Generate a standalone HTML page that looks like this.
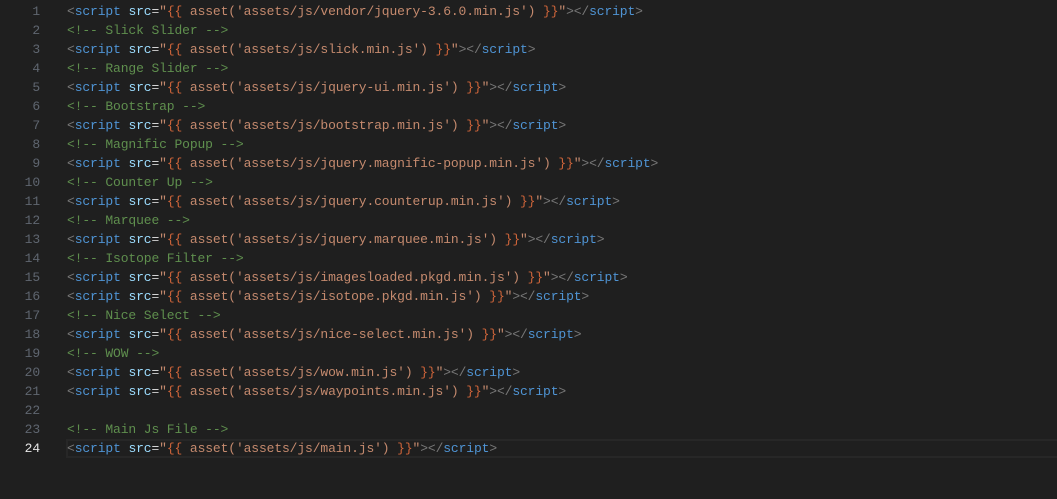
<!DOCTYPE html>
<html><head><meta charset="utf-8">
<style>
html,body{margin:0;padding:0;background:#1f1f1f;width:1057px;height:499px;overflow:hidden}
#e{position:relative;width:1057px;height:499px;font:13px/19px "Liberation Mono",monospace;letter-spacing:-.125px;white-space:pre}
.l{position:absolute;left:67px;height:19px}
.n{position:absolute;left:0;width:40px;text-align:right;height:19px;color:#5f6670}
.n.a{color:#e6e6e6}
.hl{position:absolute;left:66px;right:0;top:439px;height:19px;box-sizing:border-box;border:2px solid #272727;border-right:0}
i{font-style:normal}
.g{color:#787878}.b{color:#4f94d4}.s{color:#9cdcfe}.w{color:#d4d4d4}.o{color:#c58a6e}.y{color:#d0653a}.c{color:#5f8f4e}
</style></head><body><div id="e">
<div class="hl"></div>
<div class="n" style="top:2px">1</div><div class="l" style="top:2px"><i class="g">&lt;</i><i class="b">script</i> <i class="s">src</i><i class="w">=</i><i class="o">"</i><i class="y">{{</i> <i class="o">asset('assets/js/vendor/jquery-3.6.0.min.js')</i> <i class="y">}}</i><i class="o">"</i><i class="g">&gt;&lt;/</i><i class="b">script</i><i class="g">&gt;</i></div>
<div class="n" style="top:21px">2</div><div class="l c" style="top:21px">&lt;!-- Slick Slider --&gt;</div>
<div class="n" style="top:40px">3</div><div class="l" style="top:40px"><i class="g">&lt;</i><i class="b">script</i> <i class="s">src</i><i class="w">=</i><i class="o">"</i><i class="y">{{</i> <i class="o">asset('assets/js/slick.min.js')</i> <i class="y">}}</i><i class="o">"</i><i class="g">&gt;&lt;/</i><i class="b">script</i><i class="g">&gt;</i></div>
<div class="n" style="top:59px">4</div><div class="l c" style="top:59px">&lt;!-- Range Slider --&gt;</div>
<div class="n" style="top:78px">5</div><div class="l" style="top:78px"><i class="g">&lt;</i><i class="b">script</i> <i class="s">src</i><i class="w">=</i><i class="o">"</i><i class="y">{{</i> <i class="o">asset('assets/js/jquery-ui.min.js')</i> <i class="y">}}</i><i class="o">"</i><i class="g">&gt;&lt;/</i><i class="b">script</i><i class="g">&gt;</i></div>
<div class="n" style="top:97px">6</div><div class="l c" style="top:97px">&lt;!-- Bootstrap --&gt;</div>
<div class="n" style="top:116px">7</div><div class="l" style="top:116px"><i class="g">&lt;</i><i class="b">script</i> <i class="s">src</i><i class="w">=</i><i class="o">"</i><i class="y">{{</i> <i class="o">asset('assets/js/bootstrap.min.js')</i> <i class="y">}}</i><i class="o">"</i><i class="g">&gt;&lt;/</i><i class="b">script</i><i class="g">&gt;</i></div>
<div class="n" style="top:135px">8</div><div class="l c" style="top:135px">&lt;!-- Magnific Popup --&gt;</div>
<div class="n" style="top:154px">9</div><div class="l" style="top:154px"><i class="g">&lt;</i><i class="b">script</i> <i class="s">src</i><i class="w">=</i><i class="o">"</i><i class="y">{{</i> <i class="o">asset('assets/js/jquery.magnific-popup.min.js')</i> <i class="y">}}</i><i class="o">"</i><i class="g">&gt;&lt;/</i><i class="b">script</i><i class="g">&gt;</i></div>
<div class="n" style="top:173px">10</div><div class="l c" style="top:173px">&lt;!-- Counter Up --&gt;</div>
<div class="n" style="top:192px">11</div><div class="l" style="top:192px"><i class="g">&lt;</i><i class="b">script</i> <i class="s">src</i><i class="w">=</i><i class="o">"</i><i class="y">{{</i> <i class="o">asset('assets/js/jquery.counterup.min.js')</i> <i class="y">}}</i><i class="o">"</i><i class="g">&gt;&lt;/</i><i class="b">script</i><i class="g">&gt;</i></div>
<div class="n" style="top:211px">12</div><div class="l c" style="top:211px">&lt;!-- Marquee --&gt;</div>
<div class="n" style="top:230px">13</div><div class="l" style="top:230px"><i class="g">&lt;</i><i class="b">script</i> <i class="s">src</i><i class="w">=</i><i class="o">"</i><i class="y">{{</i> <i class="o">asset('assets/js/jquery.marquee.min.js')</i> <i class="y">}}</i><i class="o">"</i><i class="g">&gt;&lt;/</i><i class="b">script</i><i class="g">&gt;</i></div>
<div class="n" style="top:249px">14</div><div class="l c" style="top:249px">&lt;!-- Isotope Filter --&gt;</div>
<div class="n" style="top:268px">15</div><div class="l" style="top:268px"><i class="g">&lt;</i><i class="b">script</i> <i class="s">src</i><i class="w">=</i><i class="o">"</i><i class="y">{{</i> <i class="o">asset('assets/js/imagesloaded.pkgd.min.js')</i> <i class="y">}}</i><i class="o">"</i><i class="g">&gt;&lt;/</i><i class="b">script</i><i class="g">&gt;</i></div>
<div class="n" style="top:287px">16</div><div class="l" style="top:287px"><i class="g">&lt;</i><i class="b">script</i> <i class="s">src</i><i class="w">=</i><i class="o">"</i><i class="y">{{</i> <i class="o">asset('assets/js/isotope.pkgd.min.js')</i> <i class="y">}}</i><i class="o">"</i><i class="g">&gt;&lt;/</i><i class="b">script</i><i class="g">&gt;</i></div>
<div class="n" style="top:306px">17</div><div class="l c" style="top:306px">&lt;!-- Nice Select --&gt;</div>
<div class="n" style="top:325px">18</div><div class="l" style="top:325px"><i class="g">&lt;</i><i class="b">script</i> <i class="s">src</i><i class="w">=</i><i class="o">"</i><i class="y">{{</i> <i class="o">asset('assets/js/nice-select.min.js')</i> <i class="y">}}</i><i class="o">"</i><i class="g">&gt;&lt;/</i><i class="b">script</i><i class="g">&gt;</i></div>
<div class="n" style="top:344px">19</div><div class="l c" style="top:344px">&lt;!-- WOW --&gt;</div>
<div class="n" style="top:363px">20</div><div class="l" style="top:363px"><i class="g">&lt;</i><i class="b">script</i> <i class="s">src</i><i class="w">=</i><i class="o">"</i><i class="y">{{</i> <i class="o">asset('assets/js/wow.min.js')</i> <i class="y">}}</i><i class="o">"</i><i class="g">&gt;&lt;/</i><i class="b">script</i><i class="g">&gt;</i></div>
<div class="n" style="top:382px">21</div><div class="l" style="top:382px"><i class="g">&lt;</i><i class="b">script</i> <i class="s">src</i><i class="w">=</i><i class="o">"</i><i class="y">{{</i> <i class="o">asset('assets/js/waypoints.min.js')</i> <i class="y">}}</i><i class="o">"</i><i class="g">&gt;&lt;/</i><i class="b">script</i><i class="g">&gt;</i></div>
<div class="n" style="top:401px">22</div>
<div class="n" style="top:420px">23</div><div class="l c" style="top:420px">&lt;!-- Main Js File --&gt;</div>
<div class="n a" style="top:439px">24</div><div class="l" style="top:439px"><i class="g">&lt;</i><i class="b">script</i> <i class="s">src</i><i class="w">=</i><i class="o">"</i><i class="y">{{</i> <i class="o">asset('assets/js/main.js')</i> <i class="y">}}</i><i class="o">"</i><i class="g">&gt;&lt;/</i><i class="b">script</i><i class="g">&gt;</i></div>
</div></body></html>
